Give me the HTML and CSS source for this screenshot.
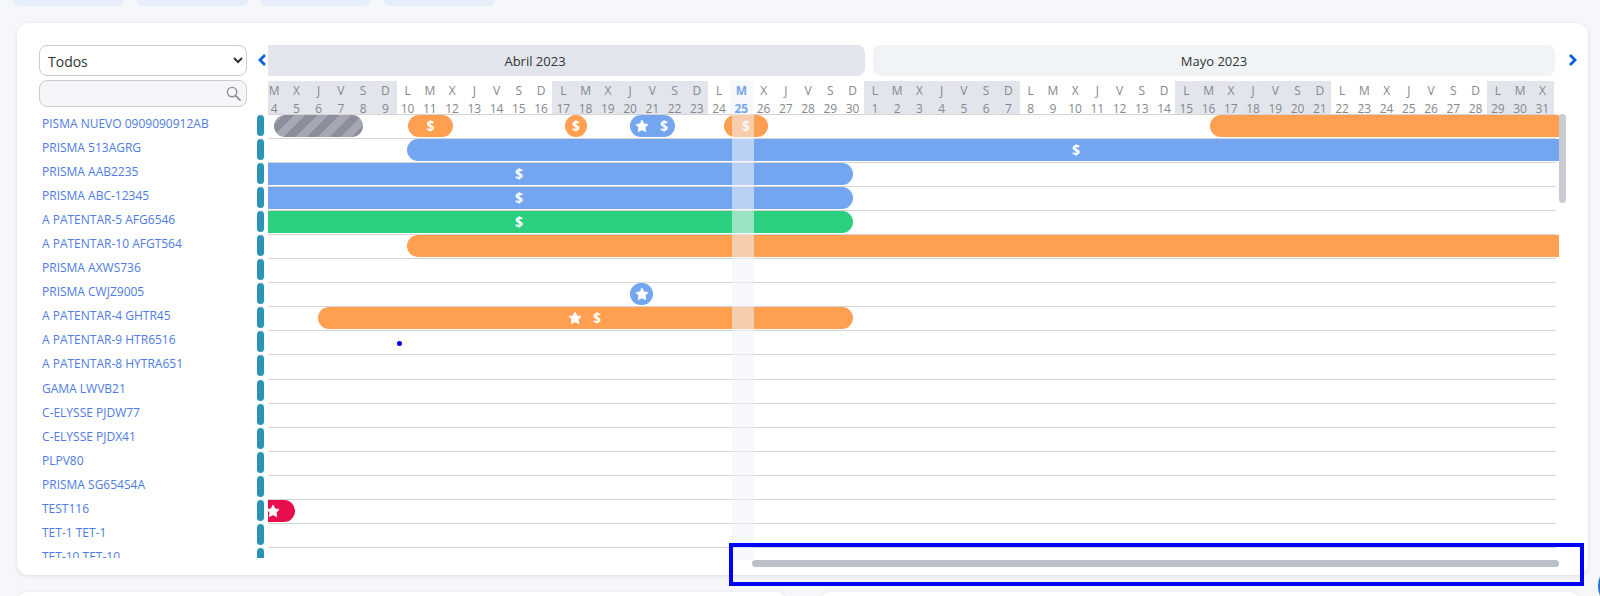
FILE: index.html
```html
<!DOCTYPE html>
<html lang="es">
<head>
<meta charset="utf-8">
<title>Calendario</title>
<link rel="stylesheet" href="styles.css">
</head>
<body>
<svg class="defs" width="0" height="0" aria-hidden="true"><symbol id="star" viewBox="0 0 24 24"><path d="M12 1.8l3.2 6.6 7.2 1-5.2 5.1 1.2 7.2-6.4-3.4-6.4 3.4 1.2-7.2-5.2-5.1 7.2-1z" fill="#fff" stroke="#fff" stroke-width="1.5" stroke-linejoin="round"/></symbol></svg>
<div class="tabs"><span class="tab"></span><span class="tab"></span><span class="tab"></span><span class="tab"></span></div>
<main class="card">
  <div class="top">
    <div class="filters">
      <select class="select"><option>Todos</option></select>
      <div class="search"><svg class="lens" viewBox="0 0 16 16"><circle cx="6.5" cy="6.5" r="5" fill="none" stroke="#8f8f8f" stroke-width="1.5"/><path d="M10.2 10.2L15 15" stroke="#8f8f8f" stroke-width="1.8" stroke-linecap="round"/></svg></div>
    </div>
    <div class="nav nav-left"><svg class="chev" viewBox="0 0 10 14"><path d="M8 2L3 7l5 5" fill="none" stroke="#0d5ed8" stroke-width="2.8"/></svg></div>
    <div class="calendar">
      <div class="inner">
        <div class="months"><div class="month active">Abril 2023</div><div class="month">Mayo 2023</div></div>
        <div class="days">
          <div class="day we">M<br>4</div><div class="day we">X<br>5</div><div class="day we">J<br>6</div><div class="day we">V<br>7</div><div class="day we">S<br>8</div><div class="day we">D<br>9</div>
          <div class="day">L<br>10</div><div class="day">M<br>11</div><div class="day">X<br>12</div><div class="day">J<br>13</div><div class="day">V<br>14</div><div class="day">S<br>15</div><div class="day">D<br>16</div>
          <div class="day we">L<br>17</div><div class="day we">M<br>18</div><div class="day we">X<br>19</div><div class="day we">J<br>20</div><div class="day we">V<br>21</div><div class="day we">S<br>22</div><div class="day we">D<br>23</div>
          <div class="day">L<br>24</div><div class="day today">M<br>25</div><div class="day">X<br>26</div><div class="day">J<br>27</div><div class="day">V<br>28</div><div class="day">S<br>29</div><div class="day">D<br>30</div>
          <div class="day we">L<br>1</div><div class="day we">M<br>2</div><div class="day we">X<br>3</div><div class="day we">J<br>4</div><div class="day we">V<br>5</div><div class="day we">S<br>6</div><div class="day we">D<br>7</div>
          <div class="day">L<br>8</div><div class="day">M<br>9</div><div class="day">X<br>10</div><div class="day">J<br>11</div><div class="day">V<br>12</div><div class="day">S<br>13</div><div class="day">D<br>14</div>
          <div class="day we">L<br>15</div><div class="day we">M<br>16</div><div class="day we">X<br>17</div><div class="day we">J<br>18</div><div class="day we">V<br>19</div><div class="day we">S<br>20</div><div class="day we">D<br>21</div>
          <div class="day">L<br>22</div><div class="day">M<br>23</div><div class="day">X<br>24</div><div class="day">J<br>25</div><div class="day">V<br>26</div><div class="day">S<br>27</div><div class="day">D<br>28</div>
          <div class="day we">L<br>29</div><div class="day we">M<br>30</div><div class="day we">X<br>31</div>
        </div>
      </div>
    </div>
    <div class="nav nav-right"><svg class="chev" viewBox="0 0 10 14"><path d="M2 2l5 5-5 5" fill="none" stroke="#0d5ed8" stroke-width="2.8"/></svg></div>
  </div>
  <div class="body">
    <div class="labels">
      <a class="label">PISMA NUEVO 0909090912AB</a><a class="label">PRISMA 513AGRG</a><a class="label">PRISMA AAB2235</a><a class="label">PRISMA ABC-12345</a><a class="label">A PATENTAR-5 AFG6546</a><a class="label">A PATENTAR-10 AFGT564</a><a class="label">PRISMA AXWS736</a><a class="label">PRISMA CWJZ9005</a><a class="label">A PATENTAR-4 GHTR45</a><a class="label">A PATENTAR-9 HTR6516</a><a class="label">A PATENTAR-8 HYTRA651</a><a class="label">GAMA LWVB21</a><a class="label">C-ELYSSE PJDW77</a><a class="label">C-ELYSSE PJDX41</a><a class="label">PLPV80</a><a class="label">PRISMA SG654S4A</a><a class="label">TEST116</a><a class="label">TET-1 TET-1</a><a class="label">TET-10 TET-10</a>
    </div>
    <div class="pins">
      <span class="pin"></span><span class="pin"></span><span class="pin"></span><span class="pin"></span><span class="pin"></span><span class="pin"></span><span class="pin"></span><span class="pin"></span><span class="pin"></span><span class="pin"></span><span class="pin"></span><span class="pin"></span><span class="pin"></span><span class="pin"></span><span class="pin"></span><span class="pin"></span><span class="pin"></span><span class="pin"></span><span class="pin"></span>
    </div>
    <div class="rows">
      <div class="row">
        <div class="bar striped" style="left:6px;width:89px"></div>
        <div class="bar orange" style="left:140px;width:45px"><b>$</b></div>
        <div class="bar orange" style="left:297px;width:22px"><b>$</b></div>
        <div class="bar blue" style="left:362px;width:45px"><svg class="star"><use href="#star"/></svg><b>$</b></div>
        <div class="bar orange" style="left:456px;width:44px"><b>$</b></div>
        <div class="bar orange" style="left:942px;width:400px"></div>
      </div>
      <div class="row"><div class="bar blue" style="left:139px;width:1338px"><b>$</b></div></div>
      <div class="row"><div class="bar blue" style="left:-83px;width:668px"><b>$</b></div></div>
      <div class="row"><div class="bar blue" style="left:-83px;width:668px"><b>$</b></div></div>
      <div class="row"><div class="bar green" style="left:-83px;width:668px"><b>$</b></div></div>
      <div class="row"><div class="bar orange" style="left:139px;width:1400px"></div></div>
      <div class="row"></div>
      <div class="row"><div class="bar blue" style="left:362px;width:23px"><svg class="star"><use href="#star"/></svg></div></div>
      <div class="row"><div class="bar orange" style="left:50px;width:535px"><svg class="star"><use href="#star"/></svg><b>$</b></div></div>
      <div class="row"><span class="dot" style="left:129px"></span></div>
      <div class="row"></div><div class="row"></div><div class="row"></div><div class="row"></div><div class="row"></div><div class="row"></div>
      <div class="row"><div class="bar red" style="left:-17px;width:44px"><svg class="star"><use href="#star"/></svg></div></div>
      <div class="row"></div><div class="row"></div>
    </div>
  </div>
  <div class="today-col"></div>
  <div class="vthumb"></div>
  <div class="hthumb"></div>
  <div class="callout"></div>
</main>
<div class="lower"><div class="panel one"></div><div class="panel two"></div></div>
<div class="fab"></div>
</body>
</html>
```
FILE: styles.css
```css
* { box-sizing: border-box; }
html, body { margin: 0; height: 596px; overflow: hidden; }
body { position: relative; background: #f5f7fa; font-family: "Open Sans", "Noto Sans", sans-serif; color: #333; }
.defs { display: block; height: 0; }

.tabs { display: flex; gap: 12.7px; height: 6px; padding-left: 13px; }
.tab { width: 111px; background: #e6eefa; border-radius: 0 0 11px 11px; }

.card { position: relative; width: 1571px; height: 552px; margin: 17px 0 0 17px; padding: 22px 0 0 22px; background: #fff; border-radius: 12px; box-shadow: 0 1px 4px rgba(60, 70, 90, .14); }

.top { display: flex; height: 72px; }
.filters { display: flex; flex-direction: column; gap: 4px; width: 208px; }
.select { width: 100%; height: 31px; padding: 1px 0 0 4px; font: 14px "Open Sans", sans-serif; color: #333; background: #fff; border: 1px solid #ccc; border-radius: 8px; }
.search { display: flex; justify-content: flex-end; align-items: center; height: 27px; padding-right: 5px; background: #f3f5f8; border: 1px solid #ccc; border-radius: 8px; }
.lens { width: 15px; height: 15px; }
.nav { display: flex; width: 21px; padding: 7.5px 0 0 10px; }
.nav-right { width: 30px; padding-left: 13px; }
.chev { width: 10px; height: 14px; }

.calendar { width: 1287px; overflow: hidden; }
.inner { width: 1292px; margin-left: -5px; }
.months { display: flex; gap: 8px; height: 31px; }
.month { display: flex; align-items: center; justify-content: center; font-size: 13px; font-weight: 500; background: #f1f4f7; border-radius: 8px; }
.month:first-child { width: 602px; padding-right: 58px; }
.month:last-child { width: 682px; }
.month.active { background: #e2e6ec; }
.days { display: grid; grid-template-columns: repeat(58, 22.26px); height: 36px; margin-top: 5px; }
.day { height: 36px; font-size: 12px; line-height: 17.5px; padding-top: 1px; text-align: center; color: #85888c; background: transparent no-repeat 0 0 / 100% 33px; }
.day.we { background-image: linear-gradient(#e2e6ec, #e2e6ec); }
.day.today { font-weight: 700; color: #78a6ee; background-image: linear-gradient(#f6f8fb, #f6f8fb); }

.body { display: flex; height: 444px; margin-top: -3px; overflow: hidden; }
.labels { width: 218px; padding-left: 3px; }
.label { display: block; height: 24.05px; font-size: 12px; line-height: 20.2px; color: #4f7be3; white-space: nowrap; }
.pins { width: 11px; padding-top: 1px; }
.pin { display: block; width: 7px; height: 21px; margin-bottom: 3.05px; background: #2a94b8; border-radius: 4px; }
.rows { position: relative; width: 1291px; overflow: hidden; }
.row { position: relative; height: 24.05px; background: linear-gradient(#d4d4d4, #d4d4d4) 0 0 / 1288px 1px no-repeat; }
.bar { position: absolute; top: 1px; display: flex; align-items: center; justify-content: center; gap: 9px; height: 22px; border-radius: 11px; }
.bar b { width: 12px; font-size: 14px; line-height: 22px; text-align: center; color: #fff; }
.star { width: 14px; height: 14px; }
.orange { background: #ff9f4f; }
.blue { background: #74a5f0; }
.green { background: #2bcf80; }
.red { background: #e80e4d; }
.striped { background: repeating-linear-gradient(-45deg, #8c8e9c 0 8px, #a5a7b2 8px 16px); }
.dot { position: absolute; top: 11px; width: 5px; height: 5px; background: #0000e0; border-radius: 50%; }

.today-col { position: absolute; left: 715px; top: 91px; width: 22.26px; height: 446px; background: rgba(240, 243, 248, .56); }
.vthumb { position: absolute; left: 1542px; top: 91px; width: 7px; height: 89px; background: #c9ccd2; border-radius: 4px; }
.hthumb { position: absolute; left: 735px; top: 537px; width: 807px; height: 7px; background: #bcc0cb; border-radius: 4px; }
.callout { position: absolute; left: 712px; top: 520px; width: 855px; height: 43px; border: 4px solid #0000ff; }

.lower { display: flex; gap: 34px; margin: 17px 0 0 17px; }
.panel { height: 20px; background: #fff; border-radius: 10px; box-shadow: 0 1px 4px rgba(60, 70, 90, .14); }
.one { width: 769px; }
.two { width: 760px; }
.fab { position: absolute; left: 1598px; top: 561px; width: 50px; height: 50px; background: #1976d2; border-radius: 50%; }
```
